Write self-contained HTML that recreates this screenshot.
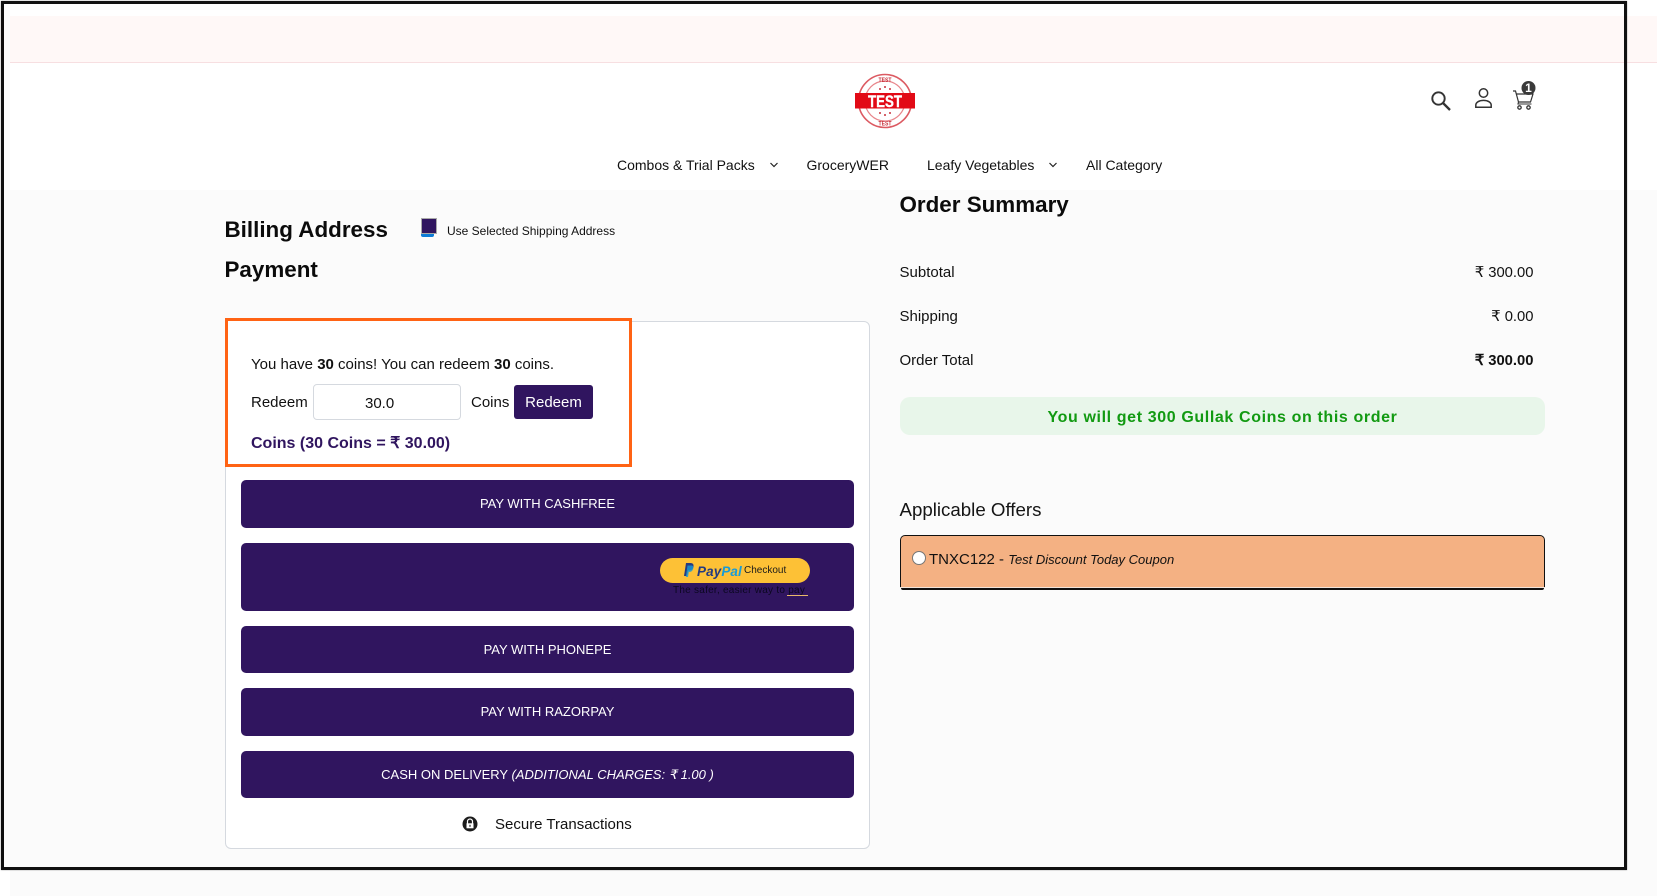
<!DOCTYPE html>
<html lang="en">
<head>
<meta charset="utf-8">
<title>Checkout</title>
<style>
html,body{margin:0;padding:0;width:1657px;height:896px;overflow:hidden;background:#fff;font-family:"Liberation Sans",Arial,sans-serif;color:#111}
.a{position:absolute}
.t{position:absolute;white-space:nowrap;line-height:20px}
.btn{position:absolute;left:241px;width:613px;background:#30155f;border-radius:5px;color:#fff;text-align:center;font-size:13px}
.r{text-align:right}
</style>
</head>
<body>
<div class="a" style="left:10px;top:16px;width:1647px;height:46px;background:#fff8f7;border-bottom:1px solid #f7dfe1"></div>
<div class="a" style="left:10px;top:190px;width:1647px;height:706px;background:#fbfbfb"></div>
<div class="a" style="left:0;top:870px;width:10px;height:26px;background:#fff"></div>

<!-- logo -->
<svg class="a" style="left:850px;top:68px" width="70" height="66" viewBox="0 0 70 66">
<circle cx="35" cy="33" r="26.5" fill="#fff" stroke="#dc5a62" stroke-width="1.6"/>
<circle cx="35" cy="33" r="20" fill="none" stroke="#e8868b" stroke-width="1.2"/>
<text x="35" y="13.800" font-size="6" font-weight="700" text-anchor="middle" fill="#c8323c" font-family="Liberation Sans" textLength="13" lengthAdjust="spacingAndGlyphs">TEST</text>
<text x="35" y="57.500" font-size="6" font-weight="700" text-anchor="middle" fill="#c8323c" font-family="Liberation Sans" textLength="13" lengthAdjust="spacingAndGlyphs">TEST</text>
<circle cx="35" cy="19" r="1" fill="#c8323c"/><circle cx="30" cy="21" r="1" fill="#c8323c"/><circle cx="40" cy="21" r="1" fill="#c8323c"/>
<circle cx="35" cy="47" r="1" fill="#c8323c"/><circle cx="30" cy="45" r="1" fill="#c8323c"/><circle cx="40" cy="45" r="1" fill="#c8323c"/>
<rect x="5" y="25" width="60" height="15.500" fill="#e20a16"/>
<text x="35" y="39" font-size="17" font-weight="700" text-anchor="middle" fill="#fff" stroke="#fff" stroke-width=".4" font-family="Liberation Sans" textLength="34" lengthAdjust="spacingAndGlyphs">TEST</text>
</svg>

<!-- nav -->
<div class="t" style="left:617px;top:155px;font-size:14px">Combos &amp; Trial Packs</div>
<svg class="a" style="left:769px;top:161px" width="10" height="8" viewBox="0 0 10 8"><path d="M1.500 2 5 5.500 8.500 2" fill="none" stroke="#222" stroke-width="1.200"/></svg>
<div class="t" style="left:806.500px;top:155px;font-size:14px">GroceryWER</div>
<div class="t" style="left:927px;top:155px;font-size:14px">Leafy Vegetables</div>
<svg class="a" style="left:1048px;top:161px" width="10" height="8" viewBox="0 0 10 8"><path d="M1.500 2 5 5.500 8.500 2" fill="none" stroke="#222" stroke-width="1.200"/></svg>
<div class="t" style="left:1086px;top:155px;font-size:14px">All Category</div>

<!-- header icons -->
<svg class="a" style="left:1426px;top:86px" width="28" height="26" viewBox="0 0 28 26"><circle cx="12.500" cy="12.500" r="6.200" fill="none" stroke="#333" stroke-width="1.900"/><path d="M17 17 24 24" stroke="#333" stroke-width="2.300" fill="none"/></svg>
<svg class="a" style="left:1472px;top:86px" width="24" height="24" viewBox="0 0 24 24"><circle cx="11.500" cy="7" r="4.200" fill="none" stroke="#333" stroke-width="1.500"/><path d="M3.800 21.200v-2c0-3 3.500-4.800 7.700-4.800s7.700 1.800 7.700 4.800v2z" fill="none" stroke="#333" stroke-width="1.500"/></svg>
<svg class="a" style="left:1510px;top:80px" width="28" height="34" viewBox="0 0 28 34"><path d="M3 11h2.500l3 11h12l2.500-8H6.500" fill="none" stroke="#333" stroke-width="1.200"/><path d="M8.500 22 8 24h13.500" fill="none" stroke="#333" stroke-width="1.100"/><circle cx="9.500" cy="27.500" r="1.700" fill="none" stroke="#333" stroke-width="1.300"/><circle cx="18.500" cy="27.500" r="1.700" fill="none" stroke="#333" stroke-width="1.300"/><circle cx="18.500" cy="8" r="7" fill="#3a3a3a"/><text x="18.500" y="12.200" text-anchor="middle" font-size="12" font-weight="700" fill="#fff" font-family="Liberation Sans">1</text></svg>

<!-- left column -->
<div class="t" style="left:224.500px;top:220px;font-size:22.400px;font-weight:700;color:#0b0b0b">Billing Address</div>
<div class="a" style="left:421px;top:218px;width:14px;height:14px;background:#30155f;border:1px solid #a9a9a9"></div>
<div class="a" style="left:421px;top:234px;width:13px;height:3px;background:#0b7bd6;border-radius:0 0 2px 2px"></div>
<div class="t" style="left:447px;top:221px;font-size:12px">Use Selected Shipping Address</div>
<div class="t" style="left:224.500px;top:260px;font-size:22.400px;font-weight:700;color:#0b0b0b">Payment</div>

<!-- card -->
<div class="a" style="left:225px;top:321px;width:643px;height:526px;background:#fff;border:1px solid #d5d9df;border-radius:6px"></div>
<div class="a" style="left:225px;top:318px;width:401px;height:143px;border:3px solid #ff6314;background:#fff"></div>
<div class="t" style="left:251px;top:355px;font-size:15px">You have <b>30</b> coins! You can redeem <b>30</b> coins.</div>
<div class="t" style="left:251px;top:393px;font-size:15px">Redeem</div>
<div class="a" style="left:313px;top:384px;width:146px;height:34px;border:1px solid #d5d9df;border-radius:4px;background:#fff"></div>
<div class="t" style="left:365px;top:394px;font-size:15px">30.0</div>
<div class="t" style="left:471px;top:393px;font-size:15px">Coins</div>
<div class="a" style="left:514px;top:385px;width:79px;height:34px;background:#30155f;border-radius:3px;color:#fff;font-size:15px;line-height:35px;text-align:center">Redeem</div>
<div class="t" style="left:251px;top:434px;font-size:16px;font-weight:700;color:#30155f">Coins (30 Coins = ₹ 30.00)</div>

<div class="btn" style="top:480px;height:48px;line-height:47.500px">PAY WITH CASHFREE</div>
<div class="btn" style="top:543px;height:68px"></div>
<div class="a" style="left:660px;top:558px;width:150px;height:25px;background:#fdc136;border-radius:13px"></div>
<svg class="a" style="left:684px;top:562px" width="10" height="16" viewBox="0 0 10 16"><path d="M2 1h4.500c2.500 0 3.300 1.500 3 3.500C9 7.500 7 8.500 5 8.500H4L3 14H0z" fill="#253b80"/><path d="M3.500 3.500h3.800c1.800 0 2.300 1.200 2 2.800C8.900 8.800 7.200 10 5.400 10H4.800L4 15H1.800z" fill="#179bd7" opacity=".8"/></svg>
<div class="t" style="left:697px;top:562px;font-size:13.500px;font-weight:700;font-style:italic;color:#253b80;letter-spacing:.1px">Pay<span style="color:#179bd7">Pal</span></div>
<div class="t" style="left:744px;top:561px;font-size:10px;color:#1a1a1a">Checkout</div>
<div class="t" style="left:673px;top:581px;font-size:10px;color:#0b0820;letter-spacing:.25px">The safer, easier way to pay</div>
<div class="a" style="left:787px;top:595px;width:21px;height:1px;background:#e8b86a"></div>
<div class="btn" style="top:626px;height:47px;line-height:47.500px">PAY WITH PHONEPE</div>
<div class="btn" style="top:688px;height:48px;line-height:47.500px">PAY WITH RAZORPAY</div>
<div class="btn" style="top:751px;height:47px;line-height:47.500px">CASH ON DELIVERY <i>(ADDITIONAL CHARGES: ₹ 1.00 )</i></div>

<svg class="a" style="left:462px;top:816px" width="16" height="16" viewBox="0 0 16 16"><circle cx="8" cy="8" r="7.500" fill="#1c1c1c"/><path d="M5.500 7.500V5.500a2.500 2.500 0 0 1 5 0v2" fill="none" stroke="#fff" stroke-width="1.200"/><rect x="4.500" y="7.300" width="7" height="5" fill="#fff"/><rect x="7.400" y="8.800" width="1.200" height="2" fill="#222"/></svg>
<div class="t" style="left:495px;top:815px;font-size:15px">Secure Transactions</div>

<!-- right column -->
<div class="t" style="left:899.500px;top:195px;font-size:22.400px;font-weight:700;color:#0b0b0b">Order Summary</div>
<div class="t" style="left:899.500px;top:263px;font-size:15px">Subtotal</div>
<div class="t r" style="right:123.500px;top:263px;font-size:14.800px">₹ 300.00</div>
<div class="t" style="left:899.500px;top:307px;font-size:15px">Shipping</div>
<div class="t r" style="right:123.500px;top:307px;font-size:14.800px">₹ 0.00</div>
<div class="t" style="left:899.500px;top:351px;font-size:15px">Order Total</div>
<div class="t r" style="right:123.500px;top:351px;font-size:14.800px;font-weight:700">₹ 300.00</div>

<div class="a" style="left:900px;top:397px;width:645px;height:38px;background:#e8f6ea;border-radius:10px;text-align:center;font-size:16px;font-weight:700;color:#129a12;line-height:42px;letter-spacing:.62px">You will get 300 Gullak Coins on this order</div>

<div class="t" style="left:899.500px;top:500px;font-size:18.700px;color:#151515">Applicable Offers</div>
<div class="a" style="left:900px;top:535px;width:643px;height:52px;background:#f4b183;border:1px solid #111;border-bottom:0;border-radius:5px 5px 0 0"></div>
<div class="a" style="left:900px;top:587px;width:645px;height:1px;background:#f3e3d8"></div>
<div class="a" style="left:901px;top:588px;width:643px;height:2px;background:#111;border-radius:0 0 4px 4px"></div>
<div class="a" style="left:912px;top:551px;width:12px;height:12px;border-radius:50%;background:#fff;border:1px solid #767676"></div>
<div class="t" style="left:929px;top:550px;font-size:15px">TNXC122 - <i style="font-size:13px">Test Discount Today Coupon</i></div>

<!-- screenshot frame -->
<div class="a" style="left:1px;top:1px;width:1620px;height:863px;border:3px solid #111;box-shadow:0 0 1px #777"></div>
</body>
</html>
